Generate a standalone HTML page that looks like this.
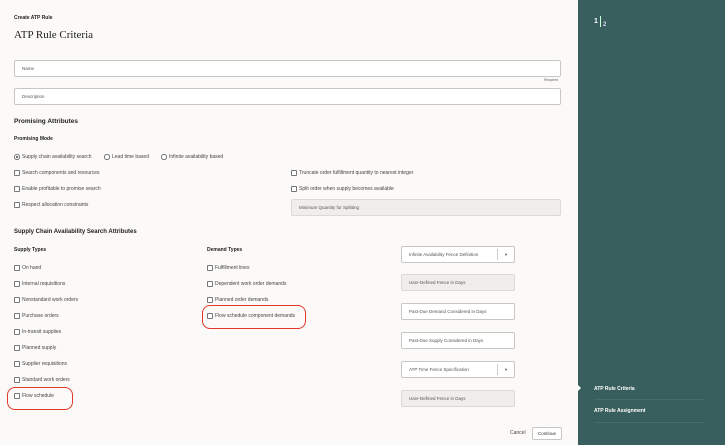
<!DOCTYPE html>
<html><head><style>
*{margin:0;padding:0;box-sizing:border-box}
body{width:725px;height:445px;overflow:hidden;background:#fbfaf8;font-family:"Liberation Sans",sans-serif;color:#333;position:relative}
.a{position:absolute;white-space:nowrap}
.t{font-size:5px;color:#444}
.b{font-weight:bold;color:#222}
.in{position:absolute;background:#fff;border:1px solid #c9c7c3;border-radius:2px;font-size:4.5px;color:#555;padding-left:7px;display:flex;align-items:center}
.g{background:#efeeec;border-color:#dcdad6}
.cb{position:absolute;width:5.5px;height:5.5px;border:0.7px solid #777;border-radius:1px;background:#fff}
.rd{position:absolute;width:5.5px;height:5.5px;border:0.7px solid #777;border-radius:50%;background:#fff}
.oval{position:absolute;border:1.2px solid #e0382a;border-radius:8px}
.dd{position:absolute;right:0;top:2px;bottom:2px;width:17px;border-left:1px solid #ccc;font-size:4px;display:flex;align-items:center;justify-content:center}
#rp{position:absolute;left:578px;top:0;width:147px;height:445px;background:#385e5e}
</style></head><body>
<div class="a t b" style="left:14px;top:15px">Create ATP Rule</div>
<div class="a" style="left:14px;top:29px;font-family:'Liberation Serif',serif;font-size:11px;color:#222">ATP Rule Criteria</div>
<div class="in" style="left:14px;top:60px;width:547px;height:17px">Name</div>
<div class="a" style="left:544px;top:78px;font-size:3.5px;color:#666">Required</div>
<div class="in" style="left:14px;top:88px;width:547px;height:17px">Description</div>
<div class="a b" style="left:14px;top:118px;font-size:6.5px">Promising Attributes</div>
<div class="a t b" style="left:14px;top:136px">Promising Mode</div>
<div class="rd" style="left:14px;top:154px"><div style="position:absolute;left:1.2px;top:1.2px;width:2px;height:2px;border-radius:50%;background:#444"></div></div>
<div class="a t" style="left:22px;top:154px">Supply chain availability search</div>
<div class="rd" style="left:104px;top:154px"></div><div class="a t" style="left:112px;top:154px">Lead time based</div>
<div class="rd" style="left:161px;top:154px"></div><div class="a t" style="left:169px;top:154px">Infinite availability based</div>
<div class="cb" style="left:14px;top:170px"></div><div class="a t" style="left:22px;top:170px">Search components and resources</div>
<div class="cb" style="left:14px;top:186px"></div><div class="a t" style="left:22px;top:186px">Enable profitable to promise search</div>
<div class="cb" style="left:14px;top:202px"></div><div class="a t" style="left:22px;top:202px">Respect allocation constraints</div>
<div class="cb" style="left:291px;top:170px"></div><div class="a t" style="left:299px;top:170px">Truncate order fulfillment quantity to nearest integer</div>
<div class="cb" style="left:291px;top:186px"></div><div class="a t" style="left:299px;top:186px">Split order when supply becomes available</div>
<div class="in g" style="left:291px;top:199px;width:270px;height:17px">Minimum Quantity for Splitting</div>
<div class="a b" style="left:14px;top:229px;font-size:6px">Supply Chain Availability Search Attributes</div>
<div class="a t b" style="left:14px;top:247px">Supply Types</div>
<div class="a t b" style="left:207px;top:247px">Demand Types</div>
<div class="cb" style="left:14px;top:265px"></div><div class="a t" style="left:22px;top:265px">On hand</div>
<div class="cb" style="left:14px;top:281px"></div><div class="a t" style="left:22px;top:281px">Internal requisitions</div>
<div class="cb" style="left:14px;top:297px"></div><div class="a t" style="left:22px;top:297px">Nonstandard work orders</div>
<div class="cb" style="left:14px;top:313px"></div><div class="a t" style="left:22px;top:313px">Purchase orders</div>
<div class="cb" style="left:14px;top:329px"></div><div class="a t" style="left:22px;top:329px">In-transit supplies</div>
<div class="cb" style="left:14px;top:345px"></div><div class="a t" style="left:22px;top:345px">Planned supply</div>
<div class="cb" style="left:14px;top:361px"></div><div class="a t" style="left:22px;top:361px">Supplier requisitions</div>
<div class="cb" style="left:14px;top:377px"></div><div class="a t" style="left:22px;top:377px">Standard work orders</div>
<div class="cb" style="left:14px;top:393px"></div><div class="a t" style="left:22px;top:393px">Flow schedule</div>
<div class="cb" style="left:207px;top:265px"></div><div class="a t" style="left:215px;top:265px">Fulfillment lines</div>
<div class="cb" style="left:207px;top:281px"></div><div class="a t" style="left:215px;top:281px">Dependent work order demands</div>
<div class="cb" style="left:207px;top:297px"></div><div class="a t" style="left:215px;top:297px">Planned order demands</div>
<div class="cb" style="left:207px;top:313px"></div><div class="a t" style="left:215px;top:313px">Flow schedule component demands</div>
<div class="oval" style="left:7px;top:387px;width:66px;height:23px"></div>
<div class="oval" style="left:202px;top:305px;width:104px;height:24px"></div>
<div class="in" style="left:401px;top:246px;width:114px;height:17px">Infinite Availability Fence Definition<div class="dd">▼</div></div>
<div class="in g" style="left:401px;top:274px;width:114px;height:17px">User-Defined Fence in Days</div>
<div class="in" style="left:401px;top:303px;width:114px;height:17px">Past-Due Demand Considered in Days</div>
<div class="in" style="left:401px;top:332px;width:114px;height:17px">Past-Due Supply Considered in Days</div>
<div class="in" style="left:401px;top:361px;width:114px;height:17px">ATP Time Fence Specification<div class="dd">▼</div></div>
<div class="in g" style="left:401px;top:390px;width:114px;height:17px">User-Defined Fence in Days</div>
<div class="a t" style="left:510px;top:430px">Cancel</div>
<div class="in" style="left:532px;top:427px;width:30px;height:13px;padding-left:5px;color:#333">Continue</div>
<div id="rp">
<div class="a" style="left:16px;top:18px;color:#fff;font-size:7px;font-weight:bold">1</div>
<div class="a" style="left:22px;top:16px;width:0.7px;height:11px;background:#cfd"></div>
<div class="a" style="left:25px;top:22px;color:#dde;font-size:6px;font-weight:bold">2</div>
<div class="a" style="left:0;top:385px;width:0;height:0;border-top:3px solid transparent;border-bottom:3px solid transparent;border-left:3px solid #fff"></div>
<div class="a" style="left:16px;top:386px;color:#fff;font-size:5px;font-weight:bold">ATP Rule Criteria</div>
<div class="a" style="left:16px;top:399px;width:110px;height:1px;background:#456b6b"></div>
<div class="a" style="left:16px;top:408px;color:#fff;font-size:5px;font-weight:bold">ATP Rule Assignment</div>
<div class="a" style="left:16px;top:422px;width:110px;height:1px;background:#456b6b"></div>
</div>
</body></html>
